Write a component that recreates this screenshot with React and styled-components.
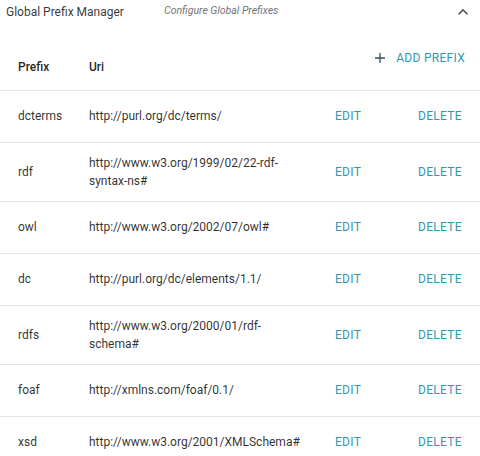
import React from 'react';
import styled, { createGlobalStyle } from 'styled-components';

const GlobalStyle = createGlobalStyle`
  html, body {
    margin: 0;
    padding: 0;
    background: #fff;
  }
  body {
    font-family: Roboto, "Liberation Sans", sans-serif;
    color: rgba(0, 0, 0, 0.87);
  }
`;

const prefixes = [
    { prefix: 'dcterms', uri: 'http://purl.org/dc/terms/' },
    { prefix: 'rdf', uri: 'http://www.w3.org/1999/02/22-rdf-syntax-ns#' },
    { prefix: 'owl', uri: 'http://www.w3.org/2002/07/owl#' },
    { prefix: 'dc', uri: 'http://purl.org/dc/elements/1.1/' },
    { prefix: 'rdfs', uri: 'http://www.w3.org/2000/01/rdf-schema#' },
    { prefix: 'foaf', uri: 'http://xmlns.com/foaf/0.1/' },
    { prefix: 'xsd', uri: 'http://www.w3.org/2001/XMLSchema#' },
];

export default function App() {
    return (
        <Panel>
            <GlobalStyle />
            <Summary>
                <Title>Global Prefix Manager</Title>
                <Subtitle>Configure Global Prefixes</Subtitle>
                <Chevron viewBox="0 0 24 24">
                    <path d="M12 8l-6 6 1.41 1.41L12 10.83l4.59 4.58L18 14z" />
                </Chevron>
            </Summary>
            <Table>
                <colgroup>
                    <col style={{ width: 89 }} />
                    <col style={{ width: 231 }} />
                    <col style={{ width: 85 }} />
                    <col style={{ width: 75 }} />
                </colgroup>
                <thead>
                    <HeadRow>
                        <HeadCell first>Prefix</HeadCell>
                        <HeadCell>Uri</HeadCell>
                        <AddCell colSpan={2}>
                            <AddButton>
                                <svg width="12" height="12" viewBox="0 0 12 12">
                                    <path d="M6 1v10M1 6h10" stroke="currentColor" strokeWidth="1.3" />
                                </svg>
                                <span>Add prefix</span>
                            </AddButton>
                        </AddCell>
                    </HeadRow>
                </thead>
                <tbody>
                    {prefixes.map((p) => (
                        <Row key={p.prefix}>
                            <Cell first>{p.prefix}</Cell>
                            <Cell>{p.uri}</Cell>
                            <ActionCell pad={15}><TextButton>Edit</TextButton></ActionCell>
                            <ActionCell pad={13}><TextButton>Delete</TextButton></ActionCell>
                        </Row>
                    ))}
                </tbody>
            </Table>
        </Panel>
    );
}

const Panel = styled.div`
  width: 480px;
  background: #fff;
`;

const Summary = styled.div`
  display: flex;
  align-items: center;
  height: 24px;
  padding: 0 6px;
`;

const Title = styled.div`
  flex: 0 0 158px;
  font-size: 12px;
  color: rgba(0, 0, 0, 0.8);
`;

const Subtitle = styled.div`
  flex: 1;
  font-size: 10.5px;
  font-style: italic;
  color: #757575;
  margin-top: -3px;
`;

const Chevron = styled.svg`
  width: 20px;
  height: 20px;
  fill: #555;
  margin-right: 1px;
`;

const Table = styled.table`
  width: 480px;
  table-layout: fixed;
  border-collapse: collapse;
  font-size: 12px;
`;

const HeadRow = styled.tr`
  height: 66px;
  border-bottom: 1px solid #e6e6e6;
`;

const HeadCell = styled.th`
  text-align: left;
  vertical-align: bottom;
  font-weight: 500;
  line-height: 18px;
  padding: 0 0 14px ${(p) => (p.first ? '18px' : '0')};
`;

const AddCell = styled.th`
  text-align: right;
  vertical-align: top;
  padding: 27px 15px 0 0;
`;

const AddButton = styled.button`
  display: inline-flex;
  align-items: center;
  gap: 10px;
  border: none;
  background: none;
  padding: 0;
  font-family: inherit;
  font-size: 12px;
  font-weight: 400;
  letter-spacing: 0.3px;
  text-transform: uppercase;
  color: #3197ae;
  svg {
    color: #3a4f58;
  }
`;

const Row = styled.tr`
  border-bottom: 1px solid #e6e6e6;
`;

const Cell = styled.td`
  line-height: 18px;
  padding: 11px ${(p) => (p.first ? '0' : '17px')} 11px ${(p) => (p.first ? '18px' : '0')};
  color: rgba(0, 0, 0, 0.82);
`;

const ActionCell = styled.td`
  padding: 11px 0 11px ${(p) => p.pad}px;
`;

const TextButton = styled.button`
  height: 29px;
  border: none;
  background: none;
  padding: 0;
  font-family: inherit;
  font-size: 12px;
  font-weight: 400;
  letter-spacing: 0.3px;
  text-transform: uppercase;
  color: #3197ae;
`;
